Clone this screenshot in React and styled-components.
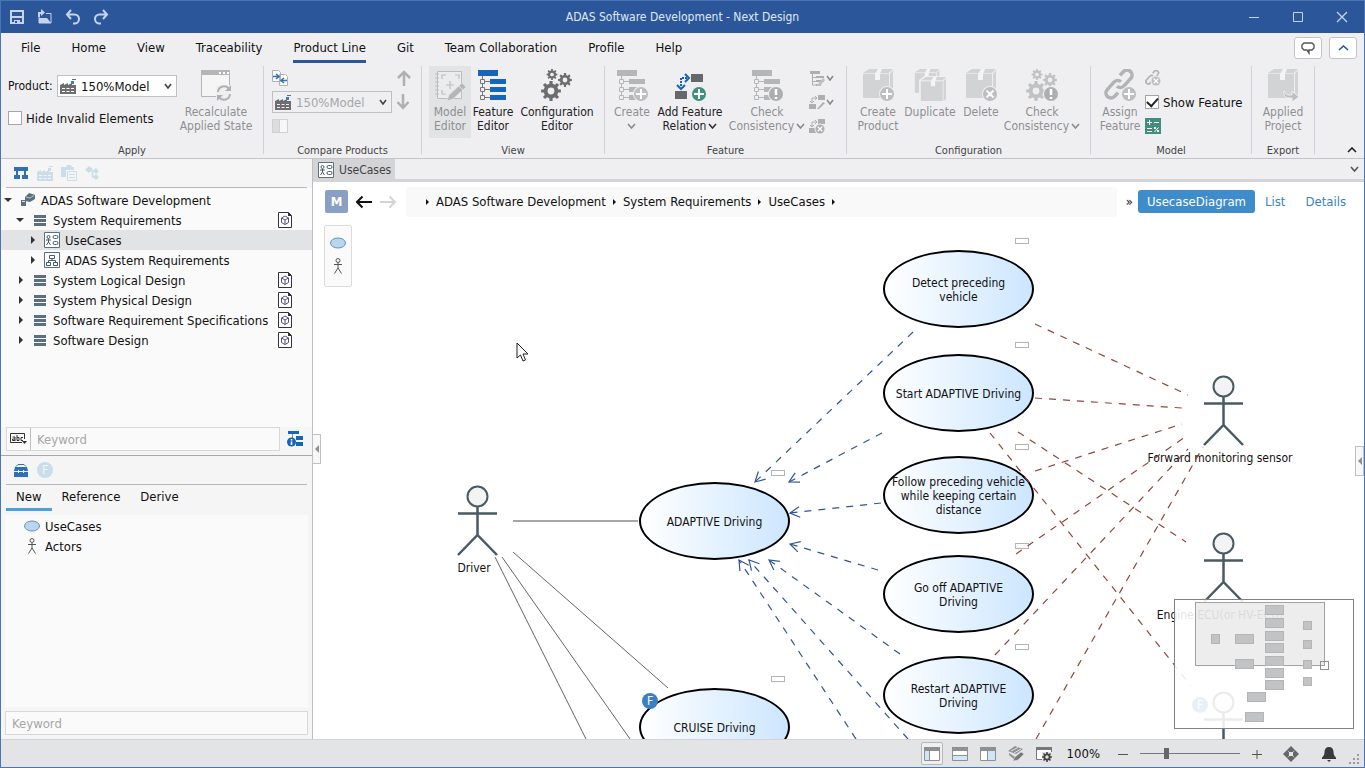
import React, { useState } from 'react'
import styled, { createGlobalStyle } from 'styled-components'

const uiFont = '"DejaVu Sans Condensed", "DejaVu Sans", "Noto Sans", sans-serif'

/* ---------- icons ---------- */

const Icon = ({ w = 16, h = w, children, ...rest }) => (
  <svg width={w} height={h} viewBox={`0 0 ${w} ${h}`} fill="none" aria-hidden="true" {...rest}>
    {children}
  </svg>
)

// toothed wheel with a round hole
function gearPath(cx, cy, r, teeth = 8) {
  const pts = []
  const step = (Math.PI * 2) / teeth
  const inner = r * 0.74
  for (let i = 0; i < teeth; i++) {
    const a = i * step
    const at = (rad, ang) => `${(cx + rad * Math.cos(ang)).toFixed(2)} ${(cy + rad * Math.sin(ang)).toFixed(2)}`
    pts.push(at(inner, a - step * 0.28), at(r, a - step * 0.2), at(r, a + step * 0.2), at(inner, a + step * 0.28))
  }
  const h = r * 0.34
  return `M${pts.join('L')}Z M${cx - h} ${cy}a${h} ${h} 0 1 0 ${h * 2} 0a${h} ${h} 0 1 0 ${-h * 2} 0Z`
}

const SaveIcon = () => (
  <Icon>
    <path d="M2 2h12v12H2z" stroke="#c5d4ec" strokeWidth="2" />
    <path d="M3 7h10v2H3zM5 11h6v3H5z" fill="#c5d4ec" />
    <path d="M6 12h2v2H6z" fill="#2b579a" />
  </Icon>
)

const OpenIcon = () => (
  <Icon>
    <path d="M2 8v6h12V4.500H9" stroke="#c5d4ec" />
    <path d="M2 14V9h8l4 5zM1 3h3V0l4 3.500-4 3.500V5H3v3H1z" fill="#c5d4ec" />
  </Icon>
)

const UndoIcon = ({ flip }) => (
  <Icon>
    <g transform={flip ? 'matrix(-1 0 0 1 16 0)' : undefined} stroke="#c5d4ec" strokeWidth="2">
      <path d="M6 1L2 5.500l4 4.500M2 5.500h7.500a4 4 0 0 1 0 9H8" />
    </g>
  </Icon>
)

const Chevron = ({ up, color = '#444', w = 9 }) => (
  <Icon w={w} h={6}>
    <path d={up ? `M1 5L${w / 2} 1L${w - 1} 5` : `M1 1L${w / 2} 5L${w - 1} 1`} stroke={color} strokeWidth="1.600" />
  </Icon>
)

const FactoryIcon = ({ color = '#6d6d6f', accent = '#3a7fc4', hole = '#fff' }) => (
  <Icon>
    <path d="M0 16V7l4-2v2l4-2v2l4-2v2h4v9z" fill={color} />
    <path d="M2 10.500h3M6.500 10.500h3M11 10.500h3M2 13.500h3M6.500 13.500h3M11 13.500h3" stroke={hole} />
    <path d="M11 3h3v3h-3z" fill={accent} />
    <path d="M12 1.500h4" stroke={color} />
  </Icon>
)

const RecalcIcon = () => (
  <Icon w={32}>
    <path d="M1.500 1.500h28v26h-28z" fill="#f5f5f6" stroke="#b5b5b7" />
    <path d="M1 1h29v5H1z" fill="#b5b5b7" />
    <path d="M19 3h2v2h-2zM23 3h2v2h-2zM27 3h2v2h-2z" fill="#fff" />
    <path d="M16 16h16v16H16z" fill="#efeff2" />
    <path d="M18 23a6 6 0 0 1 11-3M30 25a6 6 0 0 1-11 3" stroke="#b0b0b2" strokeWidth="2" />
    <path d="M31 16v6h-6zM17 32v-6h6z" fill="#b0b0b2" />
  </Icon>
)

const CompareIcon = () => (
  <Icon>
    <path d="M.5.5h6l2 2v9h-8zM7.500 4.500h6l2 2v9h-8z" fill="#fff" stroke="#b0b0b2" />
    <path d="M1 6.500h5M4 4l3 2.500L4 9M15 10.500h-5M12 8l-3 2.500 3 2.500" stroke="#2f74ba" strokeWidth="1.500" />
  </Icon>
)

const SplitIcon = () => (
  <Icon w={16} h={14}>
    <path d="M.5.5h15v13H.5z" fill="#f7f7f8" stroke="#cfcfd1" />
    <path d="M1 1h6v12H1z" fill="#dcdddf" />
    <path d="M7.500 1v12" stroke="#cfcfd1" />
  </Icon>
)

const BigArrow = ({ down }) => (
  <Icon>
    <path d={down ? 'M7 0v14M1.500 8L7 14l5.500-6' : 'M8 16V2M2 8l6-6 6 6'} stroke="#b0b0b2" strokeWidth="2.500" />
  </Icon>
)

const ModelEditorIcon = () => (
  <Icon w={32}>
    <path d="M3.500 2.500h24v27h-24z" fill="#ececee" stroke="#bcbdbf" />
    <path d="M1 5h4M1 9h4M1 13h4M1 17h4M1 21h4M1 25h4" stroke="#bcbdbf" />
    <path d="M8 10V6h4M21 6h4v4M8 21v4h4M16 12v8M12 16h8" stroke="#bcbdbf" strokeWidth="1.200" />
    <path d="M13 32l2-6 13-12 4 4-13 12z" fill="#b5b6b8" stroke="#e2e3e5" strokeWidth=".7" />
    <path d="M25 17l4 4" stroke="#e2e3e5" />
  </Icon>
)

const TreeBars = ({ color, line = '#777', children }) => (
  <Icon w={32}>
    <path d="M5.500 6v23M5.500 12.500H13M5.500 20.500H13M5.500 28.500H13" stroke={line} />
    <path d="M1 1h20v6H1zM13 10h16v5H13zM13 18h16v5H13zM13 26h16v5H13z" fill={color} />
    <path d="M3.500 10.500h4v4h-4zM3.500 18.500h4v4h-4zM3.500 26.500h4v4h-4z" fill="#efeff2" stroke={line} />
    {children}
  </Icon>
)

const Badge = ({ cx = 25, cy = 25, r = 7, color = '#bdbec0', mark = 'plus' }) => (
  <>
    <circle cx={cx} cy={cy} r={r + 1} fill="#efeff2" />
    <circle cx={cx} cy={cy} r={r} fill={color} />
    {mark === 'plus' && <path d={`M${cx - r + 2} ${cy}h${r * 2 - 4}M${cx} ${cy - r + 2}v${r * 2 - 4}`} stroke="#fff" strokeWidth="2" />}
    {mark === 'cross' && <path d={`M${cx - r / 2} ${cy - r / 2}l${r} ${r}m0 ${-r}l${-r} ${r}`} stroke="#fff" strokeWidth={r > 5 ? 2 : 1.3} />}
    {mark === 'warn' && <path d={`M${cx} ${cy - 5}v6m0 2v2`} stroke="#fff" strokeWidth="2.500" />}
  </>
)

const GearsIcon = ({ color, children }) => (
  <Icon w={32}>
    <path d={gearPath(11, 5.5, 5.5)} fill={color} fillRule="evenodd" />
    <path d={gearPath(24, 11, 7)} fill={color} fillRule="evenodd" />
    <path d={gearPath(10, 22, 10)} fill={color} fillRule="evenodd" />
    {children}
  </Icon>
)

const RelationIcon = () => (
  <Icon w={32}>
    <path d="M17 5h12v8H17zM1 22h12v8H1z" fill="#666769" />
    <path d="M7 17v-8h6" stroke="#1565b8" strokeWidth="2" strokeDasharray="2 1" />
    <path d="M11 5l4 4-4 4M3 16l4 4 4-4" stroke="#1565b8" strokeWidth="2" />
    <Badge color="#3f8f7c" />
  </Icon>
)

const Box = () => (
  <>
    <path d="M1 4l6-4h24l-4 4zM28 5l3-4v25l-3 3zM1 5h26v24H1z" fill="#d2d3d5" />
    <path d="M1 4.500h26l4-4" stroke="#e6e7e9" />
    <path d="M13 5l3-5h4l-2 5v6h-5z" fill="#f4f4f6" />
  </>
)

const BoxIcon = ({ mark }) => (
  <Icon w={32}>
    <Box />
    <Badge mark={mark} />
  </Icon>
)

const BoxesIcon = () => (
  <Icon w={32}>
    <g transform="scale(.82)"><Box /></g>
    <path d="M5 11l5-4h21v25H5z" fill="#efeff2" />
    <g transform="translate(6 8) scale(.84)"><Box /></g>
  </Icon>
)

const ExportIcon = () => (
  <Icon w={32}>
    <Box />
    <path d="M17 22c2 5 6 4 8 4v-4l7 6-7 5v-4c-4 0-9 0-8-7z" fill="#bdbec0" stroke="#efeff2" />
  </Icon>
)

const LinkRings = () => (
  <g transform="rotate(-48 15 15)" stroke="#b2b3b5" strokeWidth="3.500">
    <path d="M8 20H3a5 5 0 0 1 0-10h10a5 5 0 0 1 5 5" />
    <path d="M22 10h5a5 5 0 0 1 0 10H17a5 5 0 0 1-5-5" />
  </g>
)

const LinkIcon = () => (
  <Icon w={32}>
    <LinkRings />
    <Badge />
  </Icon>
)

const UnlinkIcon = () => (
  <Icon>
    <g transform="scale(.48)"><LinkRings /></g>
    <Badge cx={11} cy={11} r={4.5} mark="cross" />
  </Icon>
)

const MiniTreeIcon = () => (
  <Icon>
    <path d="M1 1h10v3H1zM7 6h8v2H7zM7 10h8v2H7zM7 14h5v2H7z" fill="#adaeb0" />
    <path d="M3.500 4v11H7M3.500 7.500H7M3.500 11.500H7" stroke="#adaeb0" />
    <path d="M8 15l6-7 2 2-5 6H8z" fill="#c0c1c3" />
  </Icon>
)

const MiniRelationIcon = ({ cross }) => (
  <Icon>
    <path d="M9 1h7v5H9zM0 10h7v5H0z" fill="#adaeb0" />
    <path d="M3 9V4h5M6 2l2 2-2 2M1 7l2 2 2-2" stroke="#adaeb0" />
    {cross ? <Badge cx={11} cy={11} r={4.5} color="#adaeb0" mark="cross" /> : <path d="M8 15l6-7 2 1-6 6z" fill="#adaeb0" />}
  </Icon>
)

const CalcIcon = () => (
  <Icon>
    <path d="M0 0h16v16H0z" fill="#3f8f7c" />
    <path d="M2 4.500h5M4.500 2v5M9 4.500h5M2 10.500h5M2 13.500h5M9.500 14l4-4.500" stroke="#fff" />
    <path d="M9 9h2v2H9zM12 12h2v2h-2z" fill="#fff" />
  </Icon>
)

const StructureIcon = () => (
  <Icon w={14}>
    <path d="M0 1h14v4H0zM0 9h6v4H0zM8 9h6v4H8z" fill="#2f6fb3" />
    <path d="M3 5v4M11 5v4" stroke="#2f6fb3" strokeWidth="2" />
  </Icon>
)

const PasteIcon = () => (
  <Icon>
    <path d="M0 2h5l1-2h4l1 2h2v3H5v7H0z" fill="#cadeea" />
    <path d="M6.500 6.500h9v9h-9z" fill="#f5f5f5" stroke="#cadeea" />
    <path d="M8 9.500h6M8 12.500h6" stroke="#cadeea" />
  </Icon>
)

const BranchIcon = () => (
  <Icon>
    <path d="M0 5l4-4 4 3-4 4zM11 3l3 3-3 3-3-3zM11 9l3 3-3 3-3-3z" fill="#cadeea" />
    <path d="M5 6h6M7.500 6v6h3" stroke="#cadeea" strokeWidth="1.500" />
  </Icon>
)

const ProjectIcon = () => (
  <Icon w={14}>
    <path d="M4 4l4-4 6 2v4L9 9 4 8z" fill="#587080" />
    <path d="M5 4l4 1 4-2.500" stroke="#cfd8dc" strokeWidth=".8" />
    <path d="M0 7h5v6H0z" fill="#587080" />
    <path d="M1 8.500h3" stroke="#dfe5e8" />
  </Icon>
)

const LayersIcon = () => (
  <Icon w={12}>
    <path d="M0 1h12v3H0zM0 5h12v3H0zM0 9h12v3H0z" fill="#587080" />
  </Icon>
)

const UseCaseModelIcon = () => (
  <Icon>
    <path d="M.5.500h15v15H.500z" fill="#fff" stroke="#587080" />
    <circle cx="4.500" cy="5" r="1.500" stroke="#455a64" />
    <path d="M2 8h5M4.500 7v3M2.500 13l2-3 2 3" stroke="#455a64" />
    <rect x="9" y="3.500" width="5" height="3" rx="1.500" stroke="#455a64" />
    <rect x="9" y="9.500" width="5" height="3" rx="1.500" stroke="#455a64" />
  </Icon>
)

const SystemModelIcon = () => (
  <Icon>
    <path d="M.5.500h15v15H.500z" fill="#fff" stroke="#587080" />
    <path d="M5.500 3.500h5v3h-5zM2.500 10.500h4v3h-4zM9.500 10.500h4v3h-4zM8 7v2M4.500 10V8.500h7V10" stroke="#455a64" />
  </Icon>
)

const ModelFileIcon = () => (
  <Icon w={14} h={16}>
    <path d="M.5.500h10l3 3v12H.500z" fill="#fff" stroke="#333" />
    <path d="M10 0v4h4z" fill="#333" />
    <path d="M7 4l3.500 2v4.500L7 12.500l-3.500-2V6zM3.500 6L7 8l3.500-2M7 8v4.500" stroke="#5a4a8a" />
  </Icon>
)

const AbcIcon = () => (
  <Icon w={17} h={12}>
    <path d="M14.500 6V.500H.500v9H12" stroke="#333" />
    <path d="M5 4v4M2.500 4H5M5 6H2.500v1.500H5M7 2v5.500h2V4.500H7M13 4.500h-2v3h2" stroke="#333" />
    <path d="M12 8h5l-2.500 3z" fill="#333" />
  </Icon>
)

const InfoTreeIcon = () => (
  <Icon>
    <path d="M1 0h11v3H1zM9 5h7v4H9zM9 11h7v4H9z" fill="#1565b8" />
    <path d="M5.500 3v4" stroke="#888" />
    <circle cx="4.500" cy="11" r="4.500" fill="#1565b8" />
    <path d="M4.500 10.500v3.500M4.500 8v1.500" stroke="#fff" strokeWidth="1.600" />
  </Icon>
)

const ToolboxIcon = () => (
  <Icon w={14} h={13}>
    <path d="M2 2.500L4 .500h6l2 2" stroke="#2f6fb3" />
    <path d="M1 3h12l1 4H0zM0 7h14v6H0z" fill="#2f6fb3" />
    <path d="M0 7.500h14M4.500 6v3M9.500 6v3" stroke="#e8f0f8" />
  </Icon>
)

const FBadgeIcon = ({ color = '#3a7fc4', letter = '#fff' }) => (
  <Icon>
    <circle cx="8" cy="8" r="8" fill={color} />
    <text x="8" y="12" fontSize="12" textAnchor="middle" fill={letter}>F</text>
  </Icon>
)

const OvalIcon = () => (
  <Icon w={16} h={12}>
    <ellipse cx="8" cy="6" rx="7.500" ry="5" fill="#bcd4ec" stroke="#5a95cc" />
  </Icon>
)

const StickIcon = () => (
  <Icon w={10} h={16}>
    <circle cx="5" cy="2.500" r="2" stroke="#555" />
    <path d="M1 6.500h8M5 5v5M1.500 15.500L5 10l3.500 5.500" stroke="#555" />
  </Icon>
)

const NavArrow = ({ forward }) => (
  <Icon>
    <path
      d={forward ? 'M0 8h15M9.500 2.500L15 8l-5.500 5.500' : 'M16 8H1M6.500 2.500L1 8l5.500 5.500'}
      stroke={forward ? '#d4d4d4' : '#111'}
      strokeWidth="2"
    />
  </Icon>
)

const PaneIcon = ({ side }) => (
  <Icon w={16} h={14}>
    <path d="M.5.500h15v13H.500z" fill="#fff" stroke="#8e8f91" />
    <path d="M0 0h16v4H0z" fill="#8e8f91" />
    {side === 'left' && <path d="M1 4h4v9H1z" fill="#cfe5fa" />}
    {side === 'bottom' && <path d="M1 9h14v4H1z" fill="#cfe5fa" />}
    {side === 'right' && <path d="M8 4h7v9H8z" fill="#cfe5fa" />}
    {side === 'left' && <path d="M5.500 4v9" stroke="#8e8f91" />}
    {side === 'bottom' && <path d="M1 8.500h14" stroke="#8e8f91" />}
    {side === 'right' && <path d="M7.500 4v9" stroke="#8e8f91" />}
  </Icon>
)

const BrushIcon = () => (
  <Icon>
    <path d="M0 5l7-5 8 3-7 5zM1 7l6 4v3L1 9z" fill="#8e8f91" />
    <path d="M3 5l7-3.500M6 7l7-4" stroke="#e3e4e6" />
    <path d="M5 15l2-4 6-5 3 2-6 6z" fill="#77787a" stroke="#e3e4e6" strokeWidth=".5" />
  </Icon>
)

const WindowGearIcon = () => (
  <Icon>
    <path d="M.5 1.500h15v12H.500z" fill="#fff" stroke="#77787a" />
    <path d="M0 1h16v3H0z" fill="#77787a" />
    <path d="M6 6h10v10H6z" fill="#e3e4e6" />
    <path d={gearPath(11, 11, 5)} fill="#444" fillRule="evenodd" />
  </Icon>
)

const MoveIcon = () => (
  <Icon>
    <path d="M8 0l4 4-2.500 2h-3L4 4zM8 16l4-4-2.500-2h-3L4 12zM0 8l4-4 2 2.500v3L4 12zM16 8l-4-4-2 2.500v3l2 2.500z" fill="#66676a" />
    <path d="M6 6h4v4H6z" fill="#e3e4e6" />
  </Icon>
)

const BellIcon = () => (
  <Icon>
    <path d="M8 1c-3 0-4.500 2-4.500 5 0 3-1 4-2.500 5.500V13h14v-1.500C13.500 10 12.500 9 12.500 6c0-3-1.500-5-4.500-5zM6 14h4l-2 2z" fill="#3a3a3c" />
  </Icon>
)

const GripIcon = () => (
  <Icon w={11} h={11}>
    <path d="M8 0h2v2H8zM4 4h2v2H4zM8 4h2v2H8zM0 8h2v2H0zM4 8h2v2H4zM8 8h2v2H8z" fill="#9a9a9c" />
  </Icon>
)

/* ---------- header and ribbon ---------- */

function RibbonItem({ label, icon, width, active, enabled, arrow }) {
  return (
    <RibbonButton $width={width} $active={active} $enabled={enabled}>
      {icon}
      <span className="text">
        {label.map((line, i) => (
          <span className="line" key={line}>
            {line}
            {arrow && i === label.length - 1 && <Chevron color={enabled ? '#333' : '#8a8a8c'} />}
          </span>
        ))}
      </span>
    </RibbonButton>
  )
}

function ProductSelect({ id, disabled }) {
  return (
    <SelectBox $disabled={disabled}>
      <FactoryIcon hole={disabled ? '#efeff2' : '#fff'} />
      <select id={id} aria-label="Product model" disabled={disabled}>
        <option>150%Model</option>
      </select>
      <Chevron color="#444" w={8} />
    </SelectBox>
  )
}

function Header() {
  return (
    <TitleBar>
      <div className="side">
        <TitleButton aria-label="Save"><SaveIcon /></TitleButton>
        <TitleButton aria-label="Open"><OpenIcon /></TitleButton>
        <TitleButton aria-label="Undo"><UndoIcon /></TitleButton>
        <TitleButton aria-label="Redo"><UndoIcon flip /></TitleButton>
      </div>
      <h1>ADAS Software Development - Next Design</h1>
      <div className="side right">
        <TitleButton $wide aria-label="Minimize"><Icon w={12} h={16}><path d="M1 8.500h10" stroke="#c5d4ec" /></Icon></TitleButton>
        <TitleButton $wide aria-label="Maximize"><Icon w={12} h={16}><path d="M1.500 3.500h9v9h-9z" stroke="#c5d4ec" /></Icon></TitleButton>
        <TitleButton $wide aria-label="Close"><Icon w={12} h={16}><path d="M1 3l10 10M11 3L1 13" stroke="#c5d4ec" strokeWidth="1.300" /></Icon></TitleButton>
      </div>
    </TitleBar>
  )
}

const menuTabs = ['File', 'Home', 'View', 'Traceability', 'Product Line', 'Git', 'Team Collaboration', 'Profile', 'Help']

function Ribbon() {
  const [tab, setTab] = useState('Product Line')
  const gray = '#b5b6b8'
  return (
    <>
      <MenuRow>
        <nav>
          {menuTabs.map(name => (
            <MenuTab key={name} $active={tab === name} onClick={() => setTab(name)}>{name}</MenuTab>
          ))}
        </nav>
        <div className="actions">
          <SmallButton aria-label="Feedback">
            <Icon w={14}><path d="M3 2h8l2 2v3l-2 2H8v3L6 9H3L1 7V4z" stroke="#555" strokeWidth="1.400" /></Icon>
          </SmallButton>
          <SmallButton aria-label="Collapse ribbon"><Chevron up color="#2b579a" w={11} /></SmallButton>
        </div>
      </MenuRow>
      <RibbonBody>
        <Group $width={262}>
          <div className="tools">
            <ApplyForm>
              <div className="row">
                <label htmlFor="product" className="small">Product:</label>
                <ProductSelect id="product" />
              </div>
              <CheckLabel><input type="checkbox" />Hide Invalid Elements</CheckLabel>
            </ApplyForm>
            <RibbonItem width={76} label={['Recalculate', 'Applied State']} icon={<RecalcIcon />} />
          </div>
          <h2>Apply</h2>
        </Group>
        <Separator />
        <Group $width={157} $pad={8}>
          <div className="tools">
            <IconColumn $wide>
              <ToolButton aria-label="Compare"><CompareIcon /></ToolButton>
              <ProductSelect id="compare" disabled />
              <ToolButton aria-label="Side by side"><SplitIcon /></ToolButton>
            </IconColumn>
            <IconColumn>
              <ToolButton aria-label="Previous"><BigArrow /></ToolButton>
              <ToolButton aria-label="Next"><BigArrow down /></ToolButton>
            </IconColumn>
          </div>
          <h2>Compare Products</h2>
        </Group>
        <Separator />
        <Group $width={182} $pad={7}>
          <div className="tools">
            <RibbonItem width={42} active label={['Model', 'Editor']} icon={<ModelEditorIcon />} />
            <RibbonItem width={44} enabled label={['Feature', 'Editor']} icon={<TreeBars color="#1565b8" />} />
            <RibbonItem width={84} enabled label={['Configuration', 'Editor']} icon={<GearsIcon color="#6d6d6f" />} />
          </div>
          <h2>View</h2>
        </Group>
        <Separator />
        <Group $width={241} $pad={8}>
          <div className="tools">
            <RibbonItem width={38} arrow label={['Create', '']} icon={<TreeBars color={gray} line={gray}><Badge /></TreeBars>} />
            <RibbonItem width={78} enabled arrow label={['Add Feature', 'Relation']} icon={<RelationIcon />} />
            <RibbonItem width={76} arrow label={['Check', 'Consistency']} icon={<TreeBars color={gray} line={gray}><Badge color="#adaeb0" mark="warn" /></TreeBars>} />
            <IconColumn $gap={4}>
              <ToolButton aria-label="Edit feature"><MiniTreeIcon /><Chevron color="#8a8a8c" w={8} /></ToolButton>
              <ToolButton aria-label="Edit relation"><MiniRelationIcon /><Chevron color="#8a8a8c" w={8} /></ToolButton>
              <ToolButton aria-label="Remove relation"><MiniRelationIcon cross /></ToolButton>
            </IconColumn>
          </div>
          <h2>Feature</h2>
        </Group>
        <Separator />
        <Group $width={243} $pad={6}>
          <div className="tools">
            <RibbonItem width={50} label={['Create', 'Product']} icon={<BoxIcon mark="plus" />} />
            <RibbonItem width={54} label={['Duplicate']} icon={<BoxesIcon />} />
            <RibbonItem width={48} label={['Delete']} icon={<BoxIcon mark="cross" />} />
            <RibbonItem width={74} arrow label={['Check', 'Consistency']} icon={<GearsIcon color="#c0c1c3"><Badge color="#adaeb0" mark="warn" /></GearsIcon>} />
          </div>
          <h2>Configuration</h2>
        </Group>
        <Separator />
        <Group $width={160} $pad={6}>
          <div className="tools">
            <RibbonItem width={46} label={['Assign', 'Feature']} icon={<LinkIcon />} />
            <IconColumn $gap={2}>
              <ToolButton aria-label="Unassign feature"><UnlinkIcon /></ToolButton>
              <CheckLabel><input type="checkbox" defaultChecked />Show Feature</CheckLabel>
              <ToolButton aria-label="Expression"><CalcIcon /></ToolButton>
            </IconColumn>
          </div>
          <h2>Model</h2>
        </Group>
        <Separator />
        <Group $width={62} $pad={6}>
          <div className="tools">
            <RibbonItem width={50} label={['Applied', 'Project']} icon={<ExportIcon />} />
          </div>
          <h2>Export</h2>
        </Group>
        <Separator />
        <CollapseButton aria-label="Hide ribbon"><Chevron up color="#222" w={10} /></CollapseButton>
      </RibbonBody>
    </>
  )
}

/* ---------- left panel ---------- */

const treeItems = [
  { name: 'ADAS Software Development', level: 0, open: true, icon: <ProjectIcon /> },
  { name: 'System Requirements', level: 1, open: true, icon: <LayersIcon />, file: true },
  { name: 'UseCases', level: 2, icon: <UseCaseModelIcon />, selected: true },
  { name: 'ADAS System Requirements', level: 2, icon: <SystemModelIcon /> },
  { name: 'System Logical Design', level: 1, icon: <LayersIcon />, file: true },
  { name: 'System Physical Design', level: 1, icon: <LayersIcon />, file: true },
  { name: 'Software Requirement Specifications', level: 1, icon: <LayersIcon />, file: true },
  { name: 'Software Design', level: 1, icon: <LayersIcon />, file: true },
]

function SidePanel() {
  return (
    <Side>
      <IconStrip>
        <ToolButton aria-label="Structure"><StructureIcon /></ToolButton>
        <ToolButton aria-label="Products"><FactoryIcon color="#cadeea" accent="#cadeea" hole="#f5f5f5" /></ToolButton>
        <ToolButton aria-label="Documents"><PasteIcon /></ToolButton>
        <ToolButton aria-label="Branches"><BranchIcon /></ToolButton>
      </IconStrip>
      <Tree>
        {treeItems.map(item => (
          <TreeRow key={item.name} $level={item.level} $selected={item.selected}>
            <Icon w={8}><path d={item.open ? 'M0 2h8L4 6z' : 'M3 0l4 4-4 4z'} fill="#333" /></Icon>
            <span className="icon">{item.icon}</span>
            <span className="name">{item.name}</span>
            {item.file && <ModelFileIcon />}
          </TreeRow>
        ))}
      </Tree>
      <SearchRow>
        <div className="box">
          <ToolButton aria-label="Search options"><AbcIcon /></ToolButton>
          <input type="text" placeholder="Keyword" aria-label="Keyword" />
        </div>
        <ToolButton aria-label="Show info"><InfoTreeIcon /></ToolButton>
      </SearchRow>
      <IconStrip>
        <ToolButton aria-label="Toolbox"><ToolboxIcon /></ToolButton>
        <ToolButton aria-label="Features"><FBadgeIcon color="#cadeea" letter="#f5f5f5" /></ToolButton>
      </IconStrip>
      <PanelTabs>
        <button className="active">New</button>
        <button>Reference</button>
        <button>Derive</button>
      </PanelTabs>
      <ToolList>
        <li><span><OvalIcon /></span>UseCases</li>
        <li><span><StickIcon /></span>Actors</li>
      </ToolList>
      <FilterInput type="text" placeholder="Keyword" aria-label="Filter tools" />
    </Side>
  )
}

/* ---------- diagram ---------- */

const useCases = [
  { x: 570, y: 30, text: ['Detect preceding', 'vehicle'] },
  { x: 570, y: 134, text: ['Start ADAPTIVE Driving'] },
  { x: 570, y: 236, text: ['Follow preceding vehicle', 'while keeping certain', 'distance'] },
  { x: 570, y: 335, text: ['Go off ADAPTIVE', 'Driving'] },
  { x: 570, y: 436, text: ['Restart ADAPTIVE', 'Driving'] },
  { x: 326, y: 262, text: ['ADAPTIVE Driving'] },
  { x: 326, y: 468, text: ['CRUISE Driving'], feature: true },
]

const actors = [
  { x: 164, y: 265, name: 'Driver' },
  { x: 910, y: 155, name: 'Forward monitoring sensor' },
  { x: 910, y: 312, name: 'Engine ECU(or HV-ECU)' },
  { x: 910, y: 471, feature: true },
]

const includes = [
  [600, 112, 442, 262],
  [569, 213, 476, 262],
  [568, 283, 477, 293],
  [565, 350, 477, 324],
  [587, 434, 456, 340],
  [595, 519, 436, 340],
  [543, 519, 426, 340],
]

const relations = [
  [722, 104, 875, 175],
  [722, 178, 869, 188],
  [722, 251, 869, 204],
  [703, 334, 875, 215],
  [682, 435, 875, 229],
  [723, 519, 890, 227],
  [705, 212, 873, 322],
  [677, 213, 878, 466],
]

const solids = [
  [200, 332, 355, 468],
  [189, 337, 317, 519],
  [182, 337, 273, 519],
]

// open arrow head at the end of a line
function headPath([x1, y1, x2, y2]) {
  const a = Math.atan2(y1 - y2, x1 - x2)
  const tip = d => `${(x2 + 11 * Math.cos(a + d)).toFixed(1)} ${(y2 + 11 * Math.sin(a + d)).toFixed(1)}`
  return `M${tip(0.5)}L${x2} ${y2}L${tip(-0.5)}`
}

const miniNodes = [
  ...[5, 18, 31, 43, 56, 68, 80].map(y => [90, y, 19, 10]),
  [36, 34, 9, 10], [60, 34, 19, 10], [60, 59, 19, 10],
  ...[21, 40, 60, 77].map(y => [128, y, 9, 9]),
  [72, 92, 19, 10], [70, 112, 19, 10],
]

function MiniMap() {
  return (
    <MapFrame>
      <svg width="100%" height="100%" viewBox="0 0 178 128" shapeRendering="crispEdges">
        <rect x="20.500" y="2.500" width="129" height="63" fill="rgba(205,205,205,.36)" stroke="#a3a3a5" />
        {miniNodes.map(([x, y, w, h]) => (
          <rect key={`${x}-${y}`} x={x + 0.5} y={y + 0.5} width={w - 1} height={h - 1} fill="#c2c3c5" stroke="#b4b5b7" />
        ))}
        <rect x="145.500" y="61.500" width="8" height="8" stroke="#8e8f91" fill="none" />
      </svg>
    </MapFrame>
  )
}

function Diagram() {
  return (
    <Canvas>
      <Palette>
        <ToolButton aria-label="Use case"><OvalIcon /></ToolButton>
        <ToolButton aria-label="Actor"><StickIcon /></ToolButton>
      </Palette>
      {useCases.map(u => (
        <UseCase key={u.text[0]} $x={u.x} $y={u.y}>
          <span>{u.text.map(t => <span className="line" key={t}>{t}</span>)}</span>
          <Handle />
          {u.feature && <FeatureMark><FBadgeIcon /></FeatureMark>}
        </UseCase>
      ))}
      {actors.map(a => (
        <Actor key={a.y} $x={a.x} $y={a.y}>
          <svg width="42" height="72" viewBox="0 0 42 72" fill="none" stroke="#4a5a63" strokeWidth="2">
            <circle cx="20.500" cy="11.500" r="10" fill="#f3f3f3" />
            <path d="M20.500 21.500v29M1 28.500h39M1 70l19.500-20L40 70" strokeWidth="2.500" />
          </svg>
          {a.name && <span>{a.name}</span>}
          {a.feature && <ActorMark><FBadgeIcon /></ActorMark>}
        </Actor>
      ))}
      <Connections fill="none">
        <path d="M200 301h125" stroke="#a6a6a6" strokeWidth="2" />
        {solids.map(([a, b, c, d]) => <path key={a} d={`M${a} ${b}L${c} ${d}`} stroke="#666" />)}
        {includes.map(l => (
          <g key={l.join()} stroke="#2f5597" strokeWidth="1.200">
            <path d={`M${l[0]} ${l[1]}L${l[2]} ${l[3]}`} strokeDasharray="7 7" />
            <path d={headPath(l)} />
          </g>
        ))}
        {relations.map(([a, b, c, d]) => (
          <path key={`${a}-${b}`} d={`M${a} ${b}L${c} ${d}`} stroke="#92453d" strokeWidth="1.200" strokeDasharray="7 7" />
        ))}
      </Connections>
      <Pointer>
        <Icon w={13} h={20}>
          <path d="M1 1v15l3.500-3 2.500 6 2.500-1L7 12h5z" fill="#fff" stroke="#222" />
        </Icon>
      </Pointer>
      <MiniMap />
    </Canvas>
  )
}

function Editor() {
  return (
    <Main>
      <DocTabs>
        <button className="tab"><UseCaseModelIcon />UseCases</button>
        <ToolButton aria-label="Open documents"><Chevron color="#555" w={9} /></ToolButton>
      </DocTabs>
      <NavRow>
        <ModelBadge aria-label="Model">M</ModelBadge>
        <ToolButton aria-label="Back"><NavArrow /></ToolButton>
        <ToolButton aria-label="Forward"><NavArrow forward /></ToolButton>
        <Crumbs>
          <i />
          <a href="#project">ADAS Software Development</a><i />
          <a href="#requirements">System Requirements</a><i />
          <a href="#usecases">UseCases</a><i />
        </Crumbs>
        <ViewSwitch>
          <span>»</span>
          <button className="active">UsecaseDiagram</button>
          <button>List</button>
          <button>Details</button>
        </ViewSwitch>
      </NavRow>
      <Diagram />
      <SplitHandle aria-label="Toggle navigator"><Icon w={4} h={8}><path d="M4 0v8L0 4z" fill="#8e8f91" /></Icon></SplitHandle>
      <SplitHandle $right aria-label="Toggle inspector"><Icon w={4} h={8}><path d="M4 0v8L0 4z" fill="#8e8f91" /></Icon></SplitHandle>
    </Main>
  )
}

function Footer() {
  const [zoom, setZoom] = useState(25)
  return (
    <StatusBar>
      <StatusButton $active aria-label="Left pane"><PaneIcon side="left" /></StatusButton>
      <StatusButton aria-label="Bottom pane"><PaneIcon side="bottom" /></StatusButton>
      <StatusButton aria-label="Right pane"><PaneIcon side="right" /></StatusButton>
      <StatusButton aria-label="Style"><BrushIcon /></StatusButton>
      <StatusButton aria-label="View settings"><WindowGearIcon /></StatusButton>
      <span className="zoom">100%</span>
      <StatusButton aria-label="Zoom out"><Icon w={10} h={16}><path d="M0 8.500h10" stroke="#555" /></Icon></StatusButton>
      <ZoomSlider type="range" aria-label="Zoom" value={zoom} onChange={e => setZoom(e.target.value)} />
      <StatusButton aria-label="Zoom in"><Icon w={10} h={16}><path d="M0 8.500h10M5 4v9" stroke="#555" /></Icon></StatusButton>
      <StatusButton className="fit" aria-label="Fit"><MoveIcon /></StatusButton>
      <StatusButton className="bell" aria-label="Notifications"><BellIcon /></StatusButton>
      <span className="grip"><GripIcon /></span>
    </StatusBar>
  )
}

export default function App() {
  return (
    <Window>
      <GlobalStyle />
      <Header />
      <Ribbon />
      <Workspace>
        <SidePanel />
        <Editor />
      </Workspace>
      <Footer />
    </Window>
  )
}

/* ---------- styles ---------- */

const GlobalStyle = createGlobalStyle`
  * {
    box-sizing: border-box;
  }
  body {
    margin: 0;
    overflow: hidden;
  }
  body, button, input, select {
    font-family: ${uiFont};
    font-size: 13px;
    color: #111;
  }
  button {
    margin: 0;
    padding: 0;
    border: 0;
    background: none;
  }
  svg {
    display: block;
    flex: none;
  }
`

const Window = styled.div`
  display: flex;
  flex-direction: column;
  height: 100vh;
  border: 1px solid #4a74b4;
  background: #efeff2;
`

const TitleBar = styled.header`
  flex: none;
  display: flex;
  align-items: center;
  height: 32px;
  background: #2b579a;

  h1 {
    margin: 0;
    font-size: 12px;
    font-weight: 400;
    color: #dfe8f5;
  }
  .side {
    flex: 1;
    display: flex;
    gap: 12px;
    padding-left: 8px;
  }
  .right {
    justify-content: flex-end;
    gap: 0;
  }
`

const TitleButton = styled.button`
  display: flex;
  align-items: center;
  justify-content: center;
  width: ${p => (p.$wide ? 44 : 16)}px;
  height: 24px;
`

const MenuRow = styled.div`
  flex: none;
  display: flex;
  justify-content: space-between;
  height: 32px;
  padding: 0 7px 0 20px;

  nav {
    display: flex;
    gap: 31px;
  }
  .actions {
    display: flex;
    gap: 7px;
    padding-top: 4px;
  }
`

const MenuTab = styled.button`
  height: 30px;
  padding-top: 2px;
  border-bottom: 3px solid ${p => (p.$active ? '#2b579a' : 'transparent')};
  white-space: nowrap;
`

const SmallButton = styled.button`
  display: flex;
  align-items: center;
  justify-content: center;
  width: 28px;
  height: 22px;
  border: 1px solid #c4c4c8;
  border-radius: 3px;
  background: #fff;
`

const RibbonBody = styled.div`
  flex: none;
  display: flex;
  height: 94px;
  padding-top: 1px;
  border-bottom: 1px solid #c4c4c8;
`

const Separator = styled.div`
  flex: none;
  width: 1px;
  height: 88px;
  background: #d2d2d6;
`

const Group = styled.section`
  flex: none;
  display: flex;
  flex-direction: column;
  justify-content: space-between;
  width: ${p => p.$width}px;

  .tools {
    display: flex;
    height: 72px;
    padding-left: ${p => p.$pad || 0}px;
  }
  h2 {
    margin: 0;
    font-size: 11px;
    font-weight: 400;
    line-height: 14px;
    text-align: center;
    color: #444;
  }
`

const RibbonButton = styled.button`
  flex: none;
  display: flex;
  flex-direction: column;
  align-items: center;
  gap: 4px;
  width: ${p => p.$width}px;
  padding-top: 3px;
  background: ${p => (p.$active ? '#e2e3e5' : 'none')};
  font-size: 12px;
  line-height: 14px;
  color: ${p => (p.$enabled ? '#222' : '#8e8f91')};
  white-space: nowrap;

  .line {
    display: flex;
    align-items: center;
    justify-content: center;
    gap: 2px;
    min-height: 14px;
  }
`

const ApplyForm = styled.div`
  display: flex;
  flex-direction: column;
  gap: 12px;
  width: 177px;
  padding: 9px 0 0 7px;

  .row {
    display: flex;
    align-items: center;
    justify-content: space-between;
    padding-right: 1px;
  }
  .small {
    font-size: 12px;
  }
`

const SelectBox = styled.div`
  flex: none;
  display: flex;
  align-items: center;
  width: 120px;
  height: 22px;
  padding: 0 4px 0 2px;
  border: 1px solid #c0c0c4;
  background: ${p => (p.$disabled ? '#efeff2' : '#fff')};

  select {
    flex: 1;
    min-width: 0;
    padding: 0 0 0 5px;
    border: 0;
    appearance: none;
    background: none;
    opacity: 1;
    color: ${p => (p.$disabled ? '#a6a6a8' : '#111')};
  }
`

const CheckLabel = styled.label`
  display: flex;
  align-items: center;
  gap: 4px;
  height: 18px;
  white-space: nowrap;

  input {
    display: grid;
    place-items: center;
    width: 14px;
    height: 14px;
    margin: 0;
    border: 1px solid #a6a6aa;
    appearance: none;
    background: #fff;
  }
  input:checked::before {
    content: '';
    width: 9px;
    height: 5px;
    border: solid #222;
    border-width: 0 0 2px 2px;
    transform: rotate(-48deg) translate(1px, -1px);
  }
`

const IconColumn = styled.div`
  display: flex;
  flex-direction: column;
  justify-content: ${p => (p.$gap ? 'space-between' : 'flex-start')};
  align-items: flex-start;
  gap: ${p => (p.$wide ? 5 : 8)}px;
  height: 68px;
  margin-left: ${p => (p.$wide ? 0 : p.$gap || 4)}px;
  padding-top: 4px;
`

const ToolButton = styled.button`
  flex: none;
  display: flex;
  align-items: center;
  justify-content: center;
  gap: 1px;
  min-width: 16px;
  min-height: 16px;
`

const CollapseButton = styled(ToolButton)`
  align-self: flex-end;
  margin: 0 4px 0 auto;
`

const Workspace = styled.div`
  flex: 1;
  display: flex;
  min-height: 0;
`

const Side = styled.aside`
  flex: none;
  display: flex;
  flex-direction: column;
  width: 312px;
  border-right: 1px solid #c0c0c4;
  background: #f5f5f5;
`

const IconStrip = styled.div`
  flex: none;
  display: flex;
  align-items: center;
  gap: 8px;
  height: 29px;
  margin: 0 5px;
  padding-left: 7px;
  border-bottom: 1px solid #b8b8ba;
`

const Tree = styled.ul`
  flex: 1;
  margin: 0;
  padding: 2px 0 0;
  list-style: none;
  background: #fafafa;
`

const TreeRow = styled.li`
  display: flex;
  align-items: center;
  height: 20px;
  padding: 0 20px 0 ${p => 3 + p.$level * 12}px;
  background: ${p => (p.$selected ? '#e2e3e5' : 'none')};
  white-space: nowrap;

  .icon {
    display: flex;
    justify-content: center;
    min-width: 16px;
    margin: 0 5px 0 8px;
  }
  .name {
    flex: 1;
  }
`

const SearchRow = styled.div`
  flex: none;
  display: flex;
  align-items: center;
  gap: 7px;
  height: 29px;
  padding: 0 9px 4px 5px;
  border-bottom: 1px solid #a8a8aa;

  .box {
    flex: 1;
    display: flex;
    height: 24px;
    border: 1px solid #d8d8da;
    background: #fafafa;
  }
  .box button {
    width: 24px;
    border-right: 1px solid #c0c0c4;
  }
  input {
    flex: 1;
    min-width: 0;
    padding: 0 6px;
    border: 0;
    background: none;
  }
  input::placeholder {
    color: #a6a6a6;
  }
`

const PanelTabs = styled.div`
  flex: none;
  display: flex;
  height: 30px;
  padding-left: 5px;

  button {
    height: 26px;
    padding: 0 10px;
    border-bottom: 3px solid transparent;
  }
  .active {
    border-color: #4a9fdc;
  }
`

const ToolList = styled.ul`
  height: 192px;
  flex: none;
  margin: 0 4px;
  padding: 1px 0 0 19px;
  list-style: none;
  background: #fafafa;

  li {
    display: flex;
    align-items: center;
    gap: 5px;
    height: 20px;
  }
  span {
    display: flex;
    justify-content: center;
    width: 16px;
  }
`

const FilterInput = styled.input`
  flex: none;
  height: 24px;
  margin: 4px;
  padding: 0 6px;
  border: 1px solid #d8d8da;
  background: #fafafa;

  &::placeholder {
    color: #a6a6a6;
  }
`

const Main = styled.main`
  position: relative;
  flex: 1;
  display: flex;
  flex-direction: column;
  min-width: 0;
  background: #fff;
`

const DocTabs = styled.div`
  flex: none;
  display: flex;
  justify-content: space-between;
  height: 23px;
  padding-right: 2px;
  border-bottom: 3px solid #d4d4d6;
  background: #efeff2;

  .tab {
    display: flex;
    align-items: center;
    gap: 5px;
    padding: 2px 4px 0 5px;
    background: #d4d4d6;
    font-size: 12px;
    color: #444;
  }
`

const NavRow = styled.div`
  flex: none;
  display: flex;
  align-items: center;
  height: 38px;
  padding: 1px 8px 0 12px;
  gap: 8px;
`

const ModelBadge = styled.button`
  width: 23px;
  height: 23px;
  border-radius: 2px;
  background: #8a9fc4;
  font-weight: 700;
  color: #fff;
`

const Crumbs = styled.nav`
  flex: 1;
  display: flex;
  align-items: center;
  gap: 7px;
  height: 30px;
  margin-left: 2px;
  padding-left: 20px;
  border-radius: 4px;
  background: #f9f9f9;

  a {
    color: #111;
    text-decoration: none;
    white-space: nowrap;
  }
  i {
    border: solid transparent;
    border-width: 3px 0 3px 3px;
    border-left-color: #111;
  }
`

const ViewSwitch = styled.div`
  display: flex;
  align-items: center;

  span {
    padding: 0 5px 0 1px;
  }
  button {
    height: 23px;
    padding: 0 10px;
    border-radius: 3px;
    color: #3683c4;
  }
  .active {
    padding: 0 9px;
    background: #3f8cca;
    color: #fff;
  }
`

const Canvas = styled.div`
  position: relative;
  flex: 1;
  min-height: 0;
  overflow: hidden;
  font-size: 12px;
  line-height: 14px;
`

const Palette = styled.div`
  position: absolute;
  left: 11px;
  top: 5px;
  display: flex;
  flex-direction: column;
  align-items: center;
  gap: 7px;
  width: 28px;
  height: 62px;
  padding-top: 9px;
  border: 1px solid #dcdcde;
  border-radius: 2px;
  background: #fafafa;
`

const Connections = styled.svg`
  position: absolute;
  left: 0;
  top: 0;
  width: 100%;
  height: 100%;
  pointer-events: none;
`

const UseCase = styled.div`
  position: absolute;
  left: ${p => p.$x}px;
  top: ${p => p.$y}px;
  display: flex;
  align-items: center;
  justify-content: center;
  width: 151px;
  height: 78px;
  padding-top: 2px;
  border: 2px solid #000;
  border-radius: 50%;
  background: linear-gradient(to right, #fff, #cce6ff);
  text-align: center;
  white-space: nowrap;

  .line {
    display: block;
  }
`

const Handle = styled.span`
  position: absolute;
  left: 130px;
  top: -14px;
  width: 14px;
  height: 6px;
  border: 1px solid #b4b4b6;
`

const FeatureMark = styled.span`
  position: absolute;
  left: 1px;
  top: 3px;
`

const Actor = styled.div`
  position: absolute;
  left: ${p => p.$x - 83}px;
  top: ${p => p.$y}px;
  display: flex;
  flex-direction: column;
  align-items: center;
  width: 160px;
  line-height: 22px;
  white-space: nowrap;

  svg {
    margin-left: 7px;
  }
`

const ActorMark = styled.span`
  position: absolute;
  left: 52px;
  top: 6px;

  svg {
    margin: 0;
  }
`

const Pointer = styled.div`
  position: absolute;
  left: 203px;
  top: 122px;
`

const MapFrame = styled.div`
  position: absolute;
  right: 10px;
  bottom: 10px;
  width: 180px;
  height: 130px;
  border: 1px solid #808184;
  background: rgba(255, 255, 255, .88);
`

const SplitHandle = styled.button`
  position: absolute;
  ${p => (p.$right ? 'right: 0; top: 287px;' : 'left: -1px; top: 275px;')}
  display: flex;
  align-items: center;
  justify-content: center;
  width: 9px;
  height: 30px;
  border: 1px solid #c0c0c4;
  background: #f7f7f7;
`

const StatusBar = styled.footer`
  flex: none;
  display: flex;
  align-items: center;
  justify-content: flex-end;
  gap: 6px;
  height: 28px;
  padding-right: 4px;
  border-top: 1px solid #d4d4d6;
  background: #e3e4e6;

  .zoom {
    margin: 0 6px;
  }
  .fit {
    margin-left: 6px;
  }
  .bell {
    margin: 0 3px 0 10px;
  }
  .grip {
    align-self: flex-end;
    padding-bottom: 2px;
  }
`

const StatusButton = styled.button`
  display: flex;
  align-items: center;
  justify-content: center;
  width: 22px;
  height: 23px;
  border: 1px solid ${p => (p.$active ? '#b8b8ba' : 'transparent')};
  border-radius: 2px;
  background: ${p => (p.$active ? '#efeff0' : 'none')};
`

const ZoomSlider = styled.input`
  width: 100px;
  height: 16px;
  margin: 0;
  appearance: none;
  background: linear-gradient(#77787a, #77787a) center / 100% 1px no-repeat;

  &::-webkit-slider-thumb {
    width: 5px;
    height: 11px;
    appearance: none;
    background: #66676a;
  }
`
